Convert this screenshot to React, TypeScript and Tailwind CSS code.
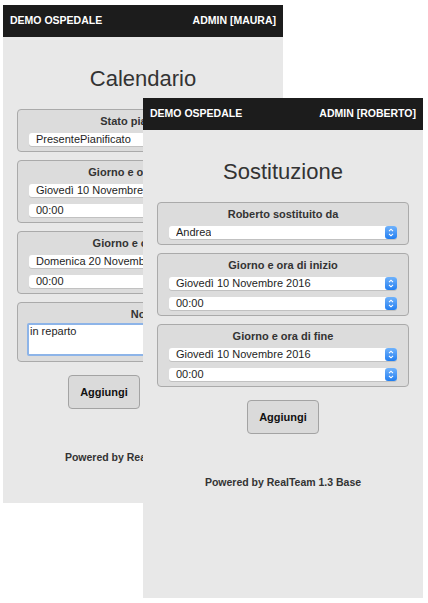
const front = {
  brand: 'DEMO OSPEDALE',
  user: 'ADMIN [ROBERTO]',
  title: 'Sostituzione'
};

const back = {
  brand: 'DEMO OSPEDALE',
  user: 'ADMIN [MAURA]',
  title: 'Calendario'
};

function Arrows() {
  return (
    <span className="flex h-[13px] w-[12px] shrink-0 items-center justify-center rounded-[3px] bg-gradient-to-b from-[#6fb2fb] to-[#1f7ef0]">
      <svg width="6" height="9" viewBox="0 0 6 9" fill="none" stroke="white" strokeWidth="1.1">
        <path d="M1 3.2 L3 1.2 L5 3.2" />
        <path d="M1 5.8 L3 7.8 L5 5.8" />
      </svg>
    </span>
  );
}

function Select({ value }: { value: string }) {
  return (
    <div className="flex h-[13px] items-center justify-between rounded-[3px] bg-white pl-[7px] shadow-[0_1px_0_rgba(0,0,0,0.12)]">
      <span className="truncate text-[11px] leading-[13px] text-[#1e1e1e]">{value}</span>
      <Arrows />
    </div>
  );
}

function Fieldset({ label, children }: { label: string; children: React.ReactNode }) {
  return (
    <div className="rounded-[4px] border border-[#aaaaaa] bg-[#dcdcdc] px-[11px] pt-[4px] pb-[5px]">
      <div className="text-center text-[11px] font-bold leading-[14px] text-[#333]">{label}</div>
      <div className="mt-[5px] flex flex-col gap-[7px]">{children}</div>
    </div>
  );
}

function Button({ label }: { label: string }) {
  return (
    <button className="h-[34px] w-[72px] rounded-[4px] border border-[#a3a3a3] bg-[#dadada] text-[11px] font-bold text-[#111]">
      {label}
    </button>
  );
}

function Screen({
  brand,
  user,
  title,
  children,
  buttons
}: {
  brand: string;
  user: string;
  title: string;
  children: React.ReactNode;
  buttons: string[];
}) {
  return (
    <div className="flex h-full w-full flex-col bg-[#e8e8e8]">
      <header className="flex h-[32px] shrink-0 items-center justify-between bg-[#1c1c1c] px-[7px] text-[10.5px] font-bold text-white">
        <span>{brand}</span>
        <span>{user}</span>
      </header>
      <main className="flex flex-col px-[14px]">
        <h1 className="mt-[29px] text-center text-[22px] leading-[26px] text-[#333]">{title}</h1>
        <div className="mt-[17px] flex flex-col gap-[8px]">{children}</div>
        <div className="mt-[13px] flex justify-center gap-[6px]">
          {buttons.map((b) => (
            <Button key={b} label={b} />
          ))}
        </div>
        <p className="mt-[42px] text-center text-[10.5px] font-bold leading-[12px] text-[#333]">
          Powered by RealTeam 1.3 Base
        </p>
      </main>
    </div>
  );
}

export default function App() {
  return (
    <div className="relative h-[603px] w-[428px] overflow-hidden bg-white font-['Liberation_Sans',Arial,sans-serif]">
      <div className="absolute left-[3px] top-[5px] h-[498px] w-[280px]">
        <Screen {...back} buttons={['Aggiungi', 'Annulla']}>
          <Fieldset label="Stato pianificato">
            <Select value="PresentePianificato" />
          </Fieldset>
          <Fieldset label="Giorno e ora di inizio">
            <Select value="Giovedì 10 Novembre 2016" />
            <Select value="00:00" />
          </Fieldset>
          <Fieldset label="Giorno e ora di fine">
            <Select value="Domenica 20 Novembre 2016" />
            <Select value="00:00" />
          </Fieldset>
          <div className="rounded-[4px] border border-[#aaaaaa] bg-[#dcdcdc] px-[9px] pt-[4px] pb-[5px]">
            <div className="text-center text-[11px] font-bold leading-[14px] text-[#333]">Note</div>
            <div className="mt-[2px] h-[33px] rounded-[2px] border-2 border-[#8db4e8] bg-white px-[1px] text-[11px] leading-[13px] text-[#1e1e1e]">
              in reparto
            </div>
          </div>
        </Screen>
      </div>

      <div className="absolute left-[143px] top-[98px] h-[500px] w-[280px]">
        <Screen {...front} buttons={['Aggiungi']}>
          <Fieldset label="Roberto sostituito da">
            <Select value="Andrea" />
          </Fieldset>
          <Fieldset label="Giorno e ora di inizio">
            <Select value="Giovedì 10 Novembre 2016" />
            <Select value="00:00" />
          </Fieldset>
          <Fieldset label="Giorno e ora di fine">
            <Select value="Giovedì 10 Novembre 2016" />
            <Select value="00:00" />
          </Fieldset>
        </Screen>
      </div>
    </div>
  );
}
